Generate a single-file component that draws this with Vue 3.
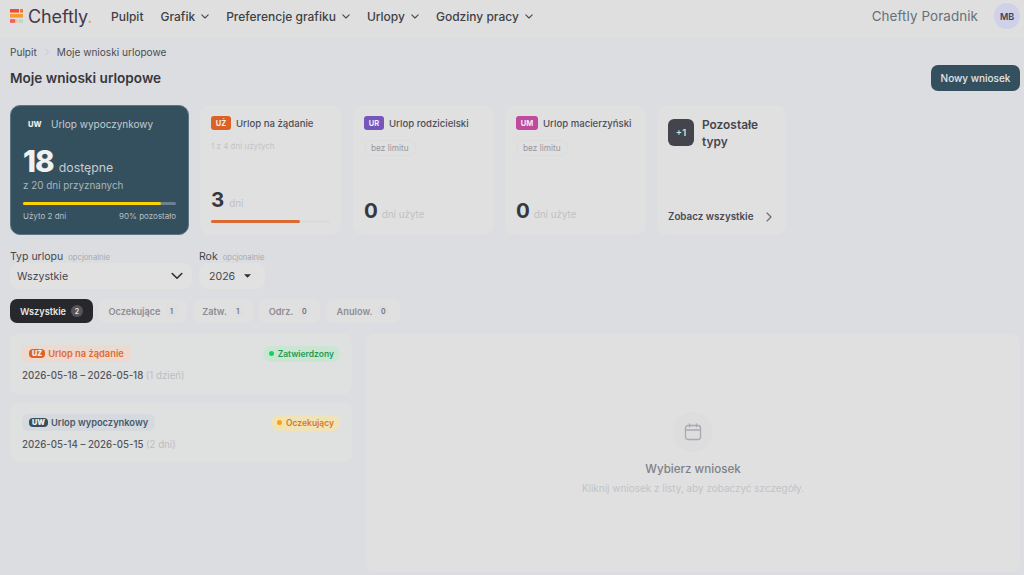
<script setup>
const navItems = [
  { label: 'Pulpit', arrow: false },
  { label: 'Grafik', arrow: true },
  { label: 'Preferencje grafiku', arrow: true },
  { label: 'Urlopy', arrow: true },
  { label: 'Godziny pracy', arrow: true }
]
const tabs = [
  { label: 'Wszystkie', n: 2, active: true },
  { label: 'Oczekujące', n: 1 },
  { label: 'Zatw.', n: 1 },
  { label: 'Odrz.', n: 0 },
  { label: 'Anulow.', n: 0 }
]
</script>

<template>
  <div class="app">
    <header class="nav">
      <div class="brand">
        <svg class="mark" width="13" height="14" viewBox="0 0 13 14">
          <rect x="0" y="0" width="9" height="3.6" fill="#ee4b3a"/>
          <rect x="10" y="0" width="3" height="3.6" fill="#f2733a"/>
          <rect x="0" y="5" width="13" height="3.6" fill="#f59a2c"/>
          <rect x="0" y="10.2" width="5.5" height="3.6" fill="#f0605a"/>
          <rect x="5.5" y="10.2" width="3" height="3.6" fill="#f2c9a8"/>
          <rect x="9" y="10.2" width="4" height="3.6" fill="#b5dcc8"/>
        </svg>
        <span class="brandname">Cheftly<em>.</em></span>
      </div>
      <nav class="menu">
        <span v-for="item in navItems" :key="item.label" class="menuitem">
          {{ item.label }}
          <svg v-if="item.arrow" width="8" height="5" viewBox="0 0 8 5"><path d="M.8.8L4 4l3.2-3.2" fill="none" stroke="#4a4a52" stroke-width="1.1" stroke-linecap="round" stroke-linejoin="round"/></svg>
        </span>
      </nav>
      <div class="user">
        <span class="username">Cheftly Poradnik</span>
        <span class="avatar">MB</span>
      </div>
    </header>

    <main class="page">
      <div class="crumbs">
        <span>Pulpit</span>
        <svg width="4" height="8" viewBox="0 0 4 8"><path d="M.5.8L3.5 4 .5 7.2" fill="none" stroke="#c9c9cd" stroke-width="1"/></svg>
        <span>Moje wnioski urlopowe</span>
      </div>
      <div class="titlerow">
        <h1>Moje wnioski urlopowe</h1>
        <button class="newbtn">Nowy wniosek</button>
      </div>

      <section class="cards">
        <article class="card hero">
          <div class="herotop"><b>UW</b><span>Urlop wypoczynkowy</span></div>
          <div class="herobig"><strong>18</strong><span>dostępne</span></div>
          <div class="herosub">z 20 dni przyznanych</div>
          <div class="herobar"><i></i></div>
          <div class="herofoot"><span>Użyto 2 dni</span><span>90% pozostało</span></div>
        </article>

        <article class="card small">
          <div class="cardtop"><b class="tag orange">UŻ</b><span>Urlop na żądanie</span></div>
          <div class="note">1 z 4 dni użytych</div>
          <div class="value"><strong>3</strong><span>dni</span></div>
          <div class="bar"><i></i></div>
        </article>

        <article class="card small">
          <div class="cardtop"><b class="tag purple">UR</b><span>Urlop rodzicielski</span></div>
          <span class="limit">bez limitu</span>
          <div class="value last"><strong>0</strong><span>dni użyte</span></div>
        </article>

        <article class="card small">
          <div class="cardtop"><b class="tag pink">UM</b><span>Urlop macierzyński</span></div>
          <span class="limit">bez limitu</span>
          <div class="value last"><strong>0</strong><span>dni użyte</span></div>
        </article>

        <article class="card more">
          <div class="moretop"><b>+1</b><span>Pozostałe typy</span></div>
          <div class="morelink">
            <span>Zobacz wszystkie</span>
            <svg width="6" height="10" viewBox="0 0 6 10"><path d="M1 1l4 4-4 4" fill="none" stroke="#6a6a70" stroke-width="1.1" stroke-linecap="round" stroke-linejoin="round"/></svg>
          </div>
        </article>
      </section>

      <section class="filters">
        <div class="field type">
          <label>Typ urlopu <small>opcjonalnie</small></label>
          <div class="select">
            <span>Wszystkie</span>
            <svg width="12" height="8" viewBox="0 0 12 8"><path d="M1.2 1.5L6 6.2l4.8-4.7" fill="none" stroke="#2e2e33" stroke-width="1.6" stroke-linecap="round" stroke-linejoin="round"/></svg>
          </div>
        </div>
        <div class="field year">
          <label>Rok <small>opcjonalnie</small></label>
          <div class="select">
            <span>2026</span>
            <svg width="7" height="4" viewBox="0 0 8 4"><path d="M0 0h8L4 4z" fill="#2e2e33"/></svg>
          </div>
        </div>
      </section>

      <section class="tabs">
        <span v-for="t in tabs" :key="t.label" class="tab" :class="{ active: t.active }">
          {{ t.label }}<i>{{ t.n }}</i>
        </span>
      </section>

      <section class="split">
        <div class="list">
          <article class="req">
            <div class="reqtop">
              <span class="type-pill o"><b>UŻ</b>Urlop na żądanie</span>
              <span class="status ok"><i></i>Zatwierdzony</span>
            </div>
            <div class="dates">2026-05-18 – 2026-05-18 <span>(1 dzień)</span></div>
          </article>
          <article class="req">
            <div class="reqtop">
              <span class="type-pill b"><b>UW</b>Urlop wypoczynkowy</span>
              <span class="status wait"><i></i>Oczekujący</span>
            </div>
            <div class="dates">2026-05-14 – 2026-05-15 <span>(2 dni)</span></div>
          </article>
        </div>
        <div class="detail">
          <span class="circle">
            <svg width="18" height="18" viewBox="0 0 18 18" fill="none" stroke="#a9a9b3" stroke-width="1.3" stroke-linecap="round" stroke-linejoin="round"><rect x="1.5" y="2.5" width="15" height="14" rx="2.5"/><path d="M1.5 7h15M5.5 .8v3M12.5 .8v3"/></svg>
          </span>
          <h2>Wybierz wniosek</h2>
          <p>Kliknij wniosek z listy, aby zobaczyć szczegóły.</p>
        </div>
      </section>
    </main>
  </div>
</template>

<style>
html, body { margin: 0; background: #dcdde0; }
</style>

<style scoped>
.app { width: 1024px; height: 575px; overflow: hidden; background: #dcdde0; font-family: Inter, "Noto Sans", sans-serif; color: #3a3a40; }
.nav { height: 38px; background: #dfdfdf; display: flex; align-items: center; padding: 0 4px 6px 10px; box-sizing: border-box; }
.brand { display: flex; align-items: center; width: 101px; }
.mark { margin-right: 5px; flex: none; }
.brandname { font-size: 18px; color: #46384a; letter-spacing: -0.1px; }
.brandname em { font-style: normal; color: #f2a02c; }
.menu { display: flex; gap: 17px; flex: 1; font-size: 12px; font-weight: 500; color: #3f3f46; }
.menuitem { display: flex; align-items: center; gap: 6px; white-space: nowrap; }
.user { display: flex; align-items: center; gap: 16px; }
.username { font-size: 13.4px; color: #667078; letter-spacing: .1px; }
.avatar { width: 26px; height: 26px; border-radius: 50%; background: #cfd0ea; color: #3f3f50; font-size: 9px; font-weight: 600; display: flex; align-items: center; justify-content: center; }

.page { padding: 7px 4px 0 10px; }
.crumbs { display: flex; align-items: center; gap: 8px; font-size: 10.1px; color: #4c4c52; height: 14px; }
.titlerow { display: flex; align-items: center; justify-content: space-between; margin-top: 6px; height: 26px; }
h1 { margin: 0; font-size: 13.6px; font-weight: 600; color: #37373d; }
.newbtn { width: 89px; height: 26px; border: 0; border-radius: 7px; background: #34505f; color: #e6e6e6; font: 500 10px Inter, sans-serif; }

.cards { display: flex; margin-top: 14px; height: 130px; gap: 11px; }
.card { box-sizing: border-box; border-radius: 10px; background: #e0e0e0; }
.hero { width: 179px; background: #34505f; padding: 11px 12px 12px; color: #c4cbd0; border: 1px solid #5d7482; }
.herotop { display: flex; align-items: center; font-size: 10px; color: #c4cbd0; height: 14px; }
.herotop b { font-size: 7.6px; color: #eee; font-weight: 800; width: 28px; padding-left: 5px; box-sizing: border-box; }
.herobig { display: flex; align-items: baseline; gap: 5px; margin-top: 12px; height: 32px; }
.herobig strong { font-size: 29.5px; font-weight: 800; color: #f1f1f1; letter-spacing: -.9px; }
.herobig span { font-size: 12.3px; }
.herosub { font-size: 9.9px; margin-top: 4px; color: #a9b5bc; }
.herobar { height: 3px; background: #6c8290; border-radius: 2px; margin-top: 11px; }
.herobar i { display: block; width: 90%; height: 100%; background: #fdd000; border-radius: 2px; }
.herofoot { display: flex; justify-content: space-between; font-size: 8px; color: #b5bfc5; margin-top: 6px; }

.small { width: 141px; padding: 11px 11px 12px; display: flex; flex-direction: column; align-items: flex-start; }
.small:nth-child(3) { margin-left: 1px; }
.cardtop { display: flex; align-items: center; gap: 5px; font-size: 9.6px; font-weight: 500; color: #4f4f56; white-space: nowrap; }
.tag { width: 20px; height: 14px; border-radius: 3px; color: #eee; font-size: 7.5px; font-weight: 700; display: flex; align-items: center; justify-content: center; }
.orange { background: #dd6125; }
.purple { background: #7556bd; }
.pink { background: #c04a9f; width: 22px; }
.note { font-size: 8px; color: #c3c3c8; margin-top: 11px; }
.value { margin-top: auto; display: flex; align-items: baseline; gap: 5px; height: 22px; }
.value strong { font-size: 20.5px; font-weight: 700; color: #37373d; }
.value span { font-size: 9.8px; color: #c0c0c6; }
.value.last { gap: 4px; margin-bottom: 3px; }
.bar { width: 100%; height: 3px; margin-top: 11px; background: #dcdcdc; border-radius: 2px; }
.bar i { display: block; width: 75%; height: 100%; background: #da6a33; border-radius: 2px; }
.limit { font-size: 8.3px; color: #96969d; border: 1px solid #dcdcdc; border-radius: 9px; padding: 2px 6px; margin-top: 10px; }

.more { width: 129px; padding: 14px 14px 13px 11px; display: flex; flex-direction: column; justify-content: space-between; }
.moretop { display: flex; gap: 8px; }
.moretop b { flex: none; width: 26px; height: 27px; border-radius: 6px; background: #44444c; color: #ddd; font-size: 9.4px; font-weight: 600; display: flex; align-items: center; justify-content: center; }
.moretop span { font-size: 11.9px; font-weight: 600; line-height: 17px; color: #46464d; width: 64px; margin-top: -3px; }
.morelink { display: flex; justify-content: space-between; align-items: center; font-size: 9.8px; font-weight: 600; color: #4a4a52; }

.filters { display: flex; gap: 7px; margin-top: 16px; }
.field label { display: block; font-size: 10.5px; color: #46464c; line-height: 12px; margin-bottom: -1px; }
.field small { font-size: 7.7px; color: #a9a9ae; margin-left: 2px; }
.select { height: 26px; border-radius: 8px; background: #e1e1e1; box-sizing: border-box; display: flex; align-items: center; justify-content: space-between; font-size: 10.6px; color: #45454b; }
.type .select { width: 182px; padding: 0 9px 0 7px; }
.year .select { width: 66px; padding: 0 14px 0 10px; }

.tabs { display: flex; gap: 6px; margin-top: 10px; }
.tab { box-sizing: border-box; height: 24px; border-radius: 7px; background: #e0e0e0; color: #8d8d94; font-size: 9.2px; font-weight: 600; display: flex; align-items: center; justify-content: center; gap: 5px; }
.tab:nth-child(1) { width: 83px; }
.tab:nth-child(2) { width: 88px; }
.tab:nth-child(3) { width: 60px; }
.tab:nth-child(4) { width: 61px; }
.tab:nth-child(5) { width: 74px; }
.tab i { font-style: normal; min-width: 12px; height: 12px; border-radius: 50%; font-size: 7px; display: flex; align-items: center; justify-content: center; color: #6d6d74; background: #dedee0; }
.tab.active { background: #28282c; color: #e6e6e6; }
.tab.active i { background: #55555b; color: #e8e8e8; }

.split { display: flex; gap: 14px; margin-top: 11px; }
.list { width: 342px; display: flex; flex-direction: column; gap: 9px; }
.req { box-sizing: border-box; height: 60px; padding: 11px 12px; border-radius: 8px; background: #dfe0e0; }
.req + .req { height: 59px; }
.reqtop { display: flex; justify-content: space-between; align-items: center; }
.type-pill { display: flex; align-items: center; gap: 3px; height: 17px; padding: 0 7px; border-radius: 6px; font-size: 9.3px; font-weight: 600; }
.type-pill b { font-size: 7.2px; color: #eee; border-radius: 4px; padding: 0 3px; line-height: 9px; height: 9px; }
.type-pill.o { background: #eed9cf; color: #dc6c34; }
.type-pill.o b { background: #dd6125; }
.type-pill.b { background: #d6d9dd; color: #46596a; }
.type-pill.b b { background: #34505f; }
.status { display: flex; align-items: center; gap: 4px; height: 16px; padding: 0 6px 0 6px; border-radius: 8px; font-size: 8.5px; font-weight: 600; }
.status i { width: 5px; height: 5px; border-radius: 50%; }
.status.ok { background: #c9e6d2; color: #1f9a55; }
.status.ok i { background: #11d45e; }
.status.wait { background: #f1e3b8; color: #d8781d; }
.status.wait i { background: #ffa10a; }
.dates { margin-top: 8px; font-size: 9.7px; font-weight: 500; color: #56565c; }
.dates span { color: #bdbdc2; font-weight: 400; }

.detail { width: 654px; height: 238px; border-radius: 8px; background: #e0e0e0; display: flex; flex-direction: column; align-items: center; padding-top: 78px; box-sizing: border-box; }
.circle { width: 40px; height: 40px; border-radius: 50%; background: #dddddd; display: flex; align-items: center; justify-content: center; }
h2 { margin: 10px 0 0; font-size: 11.6px; font-weight: 500; color: #7f7f88; }
p { margin: 6px 0 0; font-size: 9.95px; color: #c2c2c8; }
</style>
